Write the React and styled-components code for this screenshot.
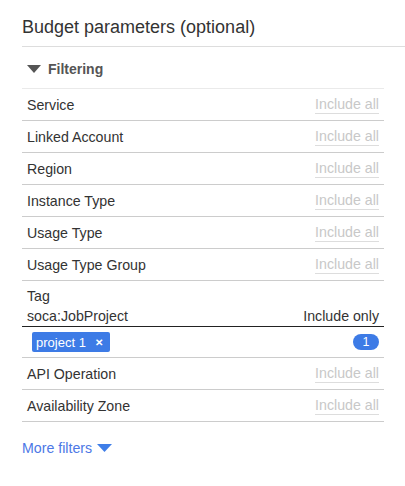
import React from "react";
import styled, { createGlobalStyle } from "styled-components";

const GlobalStyle = createGlobalStyle`
  body {
    margin: 0;
    background: #fff;
    font-family: "Liberation Sans", Arial, sans-serif;
  }
`;

const filters = [
  "Service",
  "Linked Account",
  "Region",
  "Instance Type",
  "Usage Type",
  "Usage Type Group",
];

const moreFilters = ["API Operation", "Availability Zone"];

const App = () => {
  return (
    <>
      <GlobalStyle />
      <Container>
        <Header>Budget parameters (optional)</Header>
        <Section>
          <SectionTitle>
            <Caret width="14" height="8" viewBox="0 0 14 8" $color="#555">
              <path d="M0 0 L14 0 L7 8 Z" />
            </Caret>
            Filtering
          </SectionTitle>
          {filters.map((f) => (
            <Row key={f}>
              <Label>{f}</Label>
              <Muted>Include all</Muted>
            </Row>
          ))}
          <TagRow>
            <Label>Tag</Label>
            <TagLine>
              <Label>soca:JobProject</Label>
              <Label>Include only</Label>
            </TagLine>
          </TagRow>
          <ChipRow>
            <Chip>
              project 1<Close>✕</Close>
            </Chip>
            <Badge>1</Badge>
          </ChipRow>
          {moreFilters.map((f) => (
            <Row key={f}>
              <Label>{f}</Label>
              <Muted>Include all</Muted>
            </Row>
          ))}
        </Section>
        <MoreLink>
          More filters
          <Caret width="15" height="8" viewBox="0 0 15 8" $color="#3f7ee8">
            <path d="M0 0 L15 0 L7.5 8 Z" />
          </Caret>
        </MoreLink>
      </Container>
    </>
  );
};

export default App;

const Container = styled.div`
  padding-left: 22px;
  padding-bottom: 29px;
`;

const Header = styled.h2`
  margin: 0;
  padding: 17px 0 9px;
  font-size: 18px;
  line-height: 20px;
  font-weight: normal;
  color: #333;
  border-bottom: 1px solid #ddd;
`;

const Section = styled.div`
  margin-right: 21px;
`;

const SectionTitle = styled.div`
  display: flex;
  align-items: center;
  gap: 7px;
  height: 42px;
  padding: 3px 0 0 5px;
  box-sizing: border-box;
  font-size: 14px;
  font-weight: bold;
  color: #555;
  border-bottom: 1px solid #eaeaea;
`;

const Caret = styled.svg`
  fill: ${(p) => p.$color};
  flex-shrink: 0;
`;

const Row = styled.div`
  display: flex;
  align-items: center;
  justify-content: space-between;
  height: 32px;
  box-sizing: border-box;
  padding: 0 5px;
  border-bottom: 1px solid #ccc;
`;

const Label = styled.span`
  font-size: 14.2px;
  line-height: 20px;
  color: #333;
`;

const Muted = styled.span`
  font-size: 14.2px;
  line-height: 18px;
  color: #c8c8c8;
  border-bottom: 1px solid #ddd;
`;

const TagRow = styled.div`
  display: flex;
  flex-direction: column;
  padding: 5px 5px 0;
  border-bottom: 1px solid #222;
`;

const TagLine = styled.div`
  display: flex;
  justify-content: space-between;
`;

const ChipRow = styled.div`
  display: flex;
  align-items: center;
  justify-content: space-between;
  height: 31px;
  box-sizing: border-box;
  padding: 0 5px 0 10px;
  border-bottom: 1px solid #ccc;
`;

const Chip = styled.span`
  display: inline-flex;
  align-items: center;
  height: 20px;
  padding: 0 7px 0 4px;
  background: #3d7be6;
  color: #fff;
  font-size: 13px;
  border-radius: 2px;
`;

const Close = styled.span`
  margin-left: 9px;
  font-size: 10px;
  font-weight: bold;
`;

const Badge = styled.span`
  display: inline-flex;
  align-items: center;
  justify-content: center;
  width: 26px;
  height: 16px;
  border-radius: 8px;
  background: #3d7be6;
  color: #fff;
  font-size: 12.5px;
`;

const MoreLink = styled.a`
  display: inline-flex;
  align-items: center;
  gap: 5px;
  margin-top: 16px;
  font-size: 14.2px;
  line-height: 20px;
  color: #4d78e6;
  cursor: pointer;
`;
